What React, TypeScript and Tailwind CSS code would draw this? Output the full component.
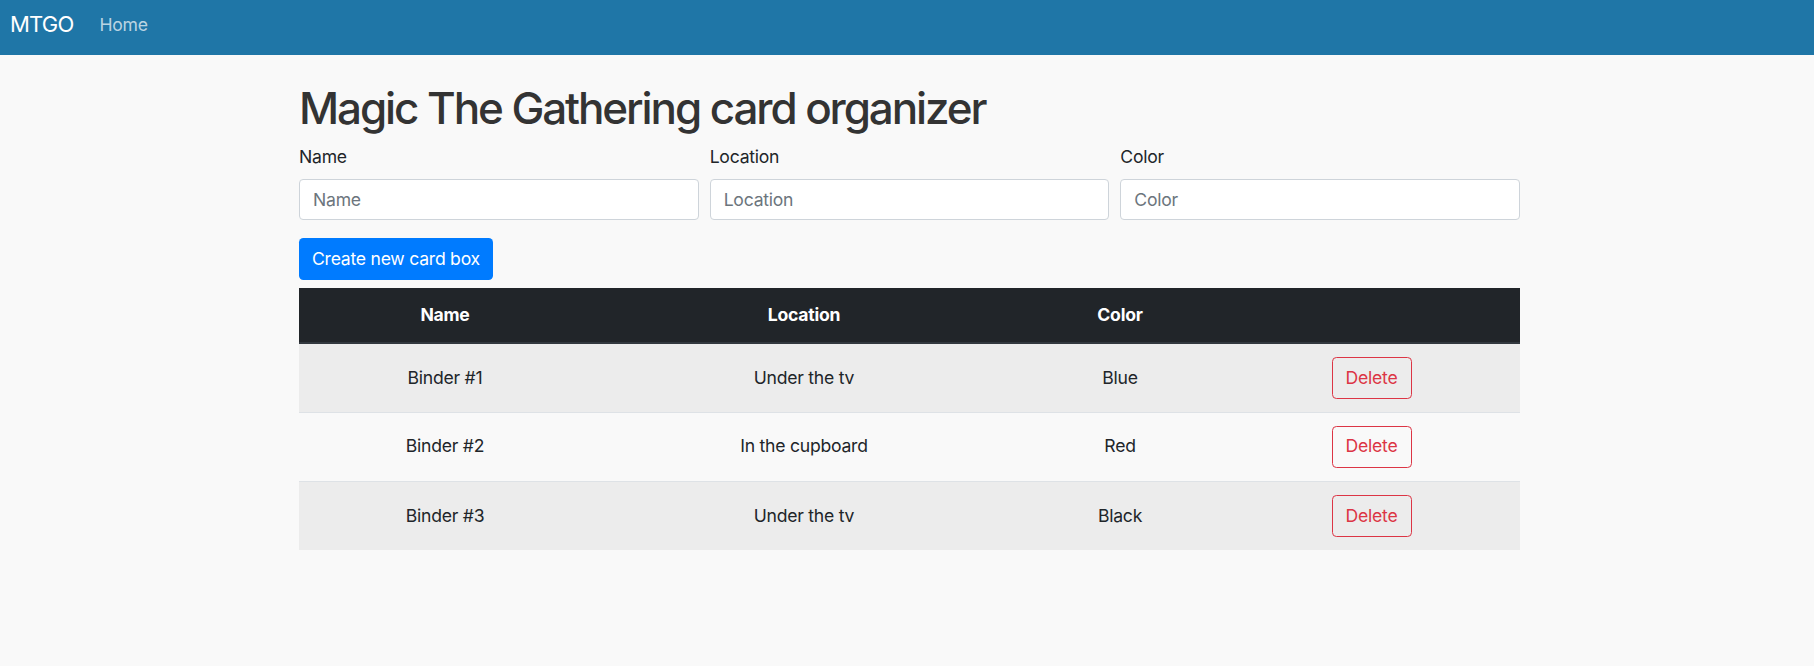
import React from "react";

const rows = [
  { name: "Binder #1", location: "Under the tv", color: "Blue" },
  { name: "Binder #2", location: "In the cupboard", color: "Red" },
  { name: "Binder #3", location: "Under the tv", color: "Black" },
];

export default function App() {
  return (
    <div className="min-h-screen bg-[#f9f9f9] text-[#212529] tracking-[-0.25px] font-['Inter','Noto_Sans',sans-serif]">
      <nav className="h-[55px] bg-[#1f76a7] flex items-center pl-[10px] pb-[6px]">
        <span className="text-[22px] text-white leading-[33px] tracking-[-0.8px]">MTGO</span>
        <span className="ml-[26px] text-[17.6px] text-white/70 leading-[26px]">Home</span>
      </nav>
      <main className="ml-[299px] w-[1221px] pt-[27px]">
        <h1 className="text-[44px] leading-[53px] font-medium text-[#333] tracking-[-2.1px] mb-[9px]">
          Magic The Gathering card organizer
        </h1>
        <div className="grid grid-cols-3 gap-x-[11px]">
          {["Name", "Location", "Color"].map((f) => (
            <div key={f} className="flex flex-col">
              <label className="text-[17.6px] leading-[26px] mb-[9px]">{f}</label>
              <input
                placeholder={f}
                className="h-[41px] rounded-[4px] border border-[#ced4da] bg-white px-[13px] text-[17.6px] placeholder:text-[#6c757d] outline-none"
              />
            </div>
          ))}
        </div>
        <button className="mt-[18px] h-[42px] px-[13px] rounded-[4.4px] bg-[#007bff] text-white text-[17.6px]">
          Create new card box
        </button>
        <table className="mt-[8px] w-[1221px] border-collapse text-[17.6px] text-center">
          <thead>
            <tr className="bg-[#212529] text-white border-b-2 border-[#32383e]">
              <th className="w-[292px] h-[55px] font-bold">Name</th>
              <th className="w-[426px] font-bold">Location</th>
              <th className="w-[206px] font-bold">Color</th>
              <th className="w-[297px]"></th>
            </tr>
          </thead>
          <tbody>
            {rows.map((r, i) => (
              <tr
                key={r.name}
                className={`${i % 2 === 0 ? "bg-[#ececec]" : "bg-[#f9f9f9]"} ${i > 0 ? "border-t border-[#dee2e6]" : ""}`}
              >
                <td className="h-[69px]">{r.name}</td>
                <td>{r.location}</td>
                <td>{r.color}</td>
                <td>
                  <button className="h-[42px] w-[80px] rounded-[4.4px] border border-[#dc3545] text-[#dc3545] text-[17.6px]">
                    Delete
                  </button>
                </td>
              </tr>
            ))}
          </tbody>
        </table>
      </main>
    </div>
  );
}
